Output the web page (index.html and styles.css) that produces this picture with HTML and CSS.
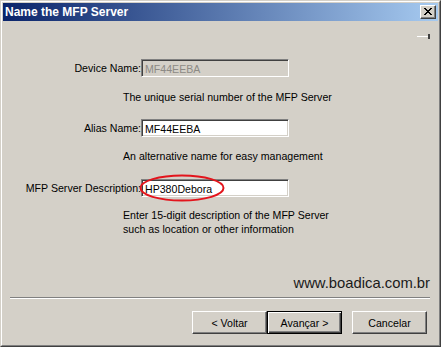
FILE: index.html
```html
<!DOCTYPE html>
<html>
<head>
<meta charset="utf-8">
<link rel="stylesheet" href="styles.css">
</head>
<body>
<div class="window">
  <div class="frame">
    <div class="titlebar">
      <span class="title">Name the MFP Server</span>
      <span class="close"><svg width="8" height="7" viewBox="0 0 8 7"><path d="M0 0h2v1h1v1h2V1h1V0h2v1H7v1H6v1H5v1h1v1h1v1h1v1H6V6H5V5H3v1H2v1H0V6h1V5h1V4h1V3H2V2H1V1H0z" fill="#000"/></svg></span>
    </div>
    <div class="content">
      <div class="topicon"><span class="line"></span><span class="tick"></span></div>
      <div class="field">
        <label class="label">Device Name:</label>
        <div class="input disabled">MF44EEBA</div>
      </div>
      <p class="help h1">The unique serial number of the MFP Server</p>
      <div class="field f2">
        <label class="label">Alias Name:</label>
        <div class="input">MF44EEBA</div>
      </div>
      <p class="help h2">An alternative name for easy management</p>
      <div class="field f3">
        <label class="label">MFP Server Description:</label>
        <div class="input">HP380Debora</div>
        <svg class="ring" width="88" height="30" viewBox="0 0 88 30"><ellipse cx="44" cy="15" rx="41.5" ry="12.5" fill="none" stroke="#e3141c" stroke-width="2"/></svg>
      </div>
      <p class="help h3">Enter 15-digit description of the MFP Server<br>such as location or other information</p>
      <div class="site">www.boadica.com.br</div>
      <div class="sep"></div>
      <div class="buttons">
        <button class="btn">&lt; Voltar</button>
        <button class="btn default">Avançar &gt;</button>
        <button class="btn cancel">Cancelar</button>
      </div>
    </div>
  </div>
</div>
</body>
</html>
```

FILE: styles.css
```css
* { box-sizing: border-box; }
html, body { margin: 0; padding: 0; background: #d4d0c8; }
body { font-family: "Liberation Sans", Arial, sans-serif; font-size: 10.6px; color: #000; }

.window {
  width: 441px; height: 347px;
  border: 1px solid; border-color: #d4d0c8 #404040 #404040 #d4d0c8;
  background: #d4d0c8;
}
.frame {
  height: 100%;
  border: 1px solid; border-color: #fff #808080 #808080 #fff;
  padding: 1px;
  display: flex; flex-direction: column;
}
.titlebar {
  height: 18px;
  background: linear-gradient(to right, #0a246a, #a6caf0);
  display: flex; align-items: center; justify-content: space-between;
  padding: 0 2px 0 2px;
}
.title { color: #fff; font-weight: bold; font-size: 12px; }
.close {
  width: 16px; height: 14px; background: #d4d0c8;
  border: 1px solid; border-color: #fff #404040 #404040 #fff;
  box-shadow: inset -1px -1px 0 #808080;
  display: flex; align-items: center; justify-content: center;
  padding: 0 1px 1px 0;
}
.content { flex: 1; position: relative; }

.topicon { display: flex; align-items: center; justify-content: flex-end; margin: 12px 8px 0 0; height: 6px; }
.topicon .line { width: 11px; height: 1px; background: #fff; }
.topicon .tick { width: 2px; height: 5px; background: #404040; }

.field { display: flex; align-items: center; margin-top: 20px; position: relative; }
.f2 { margin-top: 15px; }
.f3 { margin-top: 16px; }
.label { width: 138px; text-align: right; white-space: nowrap; }
.input {
  width: 148px; height: 18px;
  border: 1px solid; border-color: #808080 #fff #fff #808080;
  box-shadow: inset 1px 1px 0 #404040, inset -1px -1px 0 #d4d0c8;
  background: #fff; padding: 2px 3px; line-height: 14px;
}
.input.disabled { background: #d4d0c8; color: #8c8a85; }
.ring { position: absolute; left: 135px; top: -6px; }

.help { margin: 13px 0 0 120px; line-height: 14px; }
.h2 { margin-top: 12px; }
.h3 { margin-top: 11px; }

.site { text-align: right; font-size: 14.8px; line-height: 17px; color: #1a1a1a; margin: 39px 8px 0 0; }
.sep { height: 2px; margin: 5px 8px 0 7px; border-top: 1px solid #808080; border-bottom: 1px solid #fff; }

.buttons { display: flex; justify-content: flex-end; margin: 12px 11px 0 0; }
.btn {
  width: 75px; height: 23px; font: inherit; color: #000;
  background: #d4d0c8;
  border: 1px solid; border-color: #fff #404040 #404040 #fff;
  box-shadow: inset -1px -1px 0 #808080;
  padding: 0;
}
.btn.default { border: 1px solid #000; box-shadow: inset 1px 1px 0 #fff, inset -1px -1px 0 #404040, inset -2px -2px 0 #808080; }
.btn.cancel { margin-left: 10px; }
```
